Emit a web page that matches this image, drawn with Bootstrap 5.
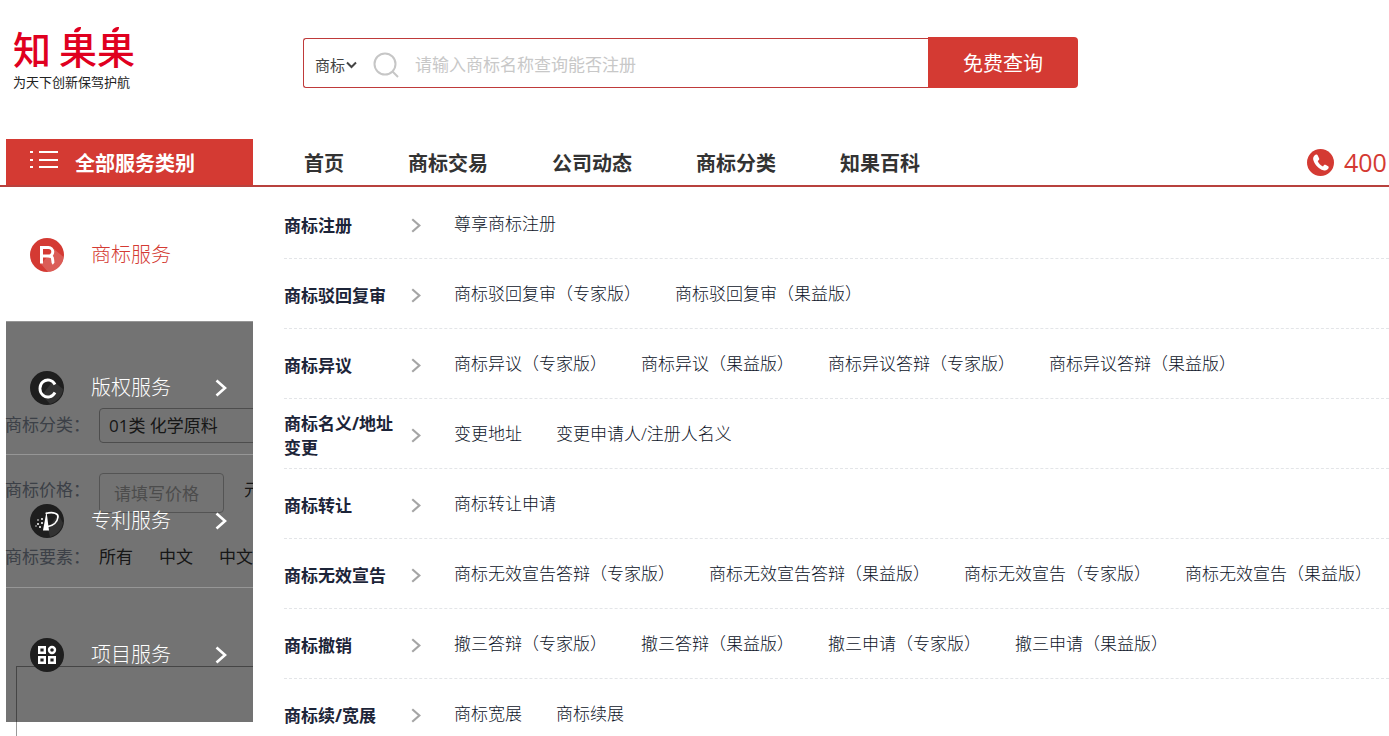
<!DOCTYPE html>
<html lang="zh-CN">
<head>
<meta charset="utf-8">
<meta name="viewport" content="width=device-width, initial-scale=1">
<title>知果果</title>
<link href="https://cdn.jsdelivr.net/npm/bootstrap@5.3.0/dist/css/bootstrap.min.css" rel="stylesheet">
<style>
:root { --brand: #d43a33; --ink: #1c2438; }
body { font-family: "Open Sans", "Noto Sans CJK SC", sans-serif; font-size: 17px; line-height: 24px; color: #333; background: #fff; }
a { text-decoration: none; color: inherit; }
button, input, select { font-family: inherit; }
svg { flex-shrink: 0; display: block; }

.brand-col { width: 303px; padding: 22px 0 0 13px; }
.logo-name { font: 500 38px/52px "Noto Sans CJK SC", sans-serif; color: #e0001f; gap: 8px; position: relative; }
.logo-name svg { position: absolute; left: 0; top: 3px; }
.logo-tag { font-size: 13px; line-height: 16px; color: #222; }

.search-col { width: 775px; padding-top: 37px; }
.search-box { border: 1px solid #bf3a3a; border-right: 0; border-radius: 3px 0 0 3px; height: 50px; margin-top: 1px; padding: 3px 0 0 11px; }
.kind-select { appearance: none; border: 0; background: none; font-size: 15px; color: #444; width: 31px; padding: 0; }
.search-input { border: 0; outline: 0; font-size: 17px; padding: 0; background: none; margin-left: 16px; }
.search-input::placeholder { color: #c8c8c8; }
.search-btn { width: 150px; height: 51px; font-size: 20px; color: #fff; background: var(--brand); border: 0; border-radius: 0 4px 4px 0; padding-top: 3px; }

.top-area { min-height: 139px; }
.main-nav { border-bottom: 2px solid #b8413d; height: 48px; padding-left: 6px; }
.all-cats { width: 247px; background: var(--brand); color: #fff; font-size: 20px; padding: 3px 0 0 24px; gap: 16px; }
.nav-links { font-size: 20px; gap: 64px; padding: 3px 0 0 51px; }
.hotline { width: 82px; gap: 10px; font-size: 25px; color: var(--brand); white-space: nowrap; }

.filters { padding: 221px 0 0 5px; }
.filter-row { line-height: 34px; }
.filter-name { width: 94px; color: #858f9e; flex-shrink: 0; }
.class-select { appearance: none; height: 35px; width: 260px; border: 1px solid #aaa; border-radius: 4px; background: #fff; padding: 0 9px; font-size: 17px; color: #333; }
.price-row { margin-top: 30px; }
.price-input { width: 125px; height: 40px; border: 1px solid #bbb; border-radius: 4px; padding: 0 14px; font-size: 17px; }
.price-input::placeholder { color: #a9a9a9; }
.unit { padding-left: 20px; }
.element-row { margin-top: 27px; }
.element-list { gap: 26px; }
.result-box { margin: 92px 16px 0 11px; border: 1px solid #999; border-bottom: 0; }

.mega { position: absolute; left: 6px; right: 0; top: 187px; bottom: 0; }
.side-menu { width: 247px; font-size: 20px; font-weight: 300; }
.side-item { height: 133px; padding: 0 26px 0 24px; color: #fff; background: rgba(0,0,0,.55); border-top: 1px solid rgba(255,255,255,.25); gap: 27px; }
.side-item.current { height: 134px; background: #fff; color: var(--brand); border-color: #fff; }
.side-item:last-child { height: 135px; }
.panel { background: #fff; padding: 2px 0 0 31px; min-width: 0; }
.service-row { height: 70px; border-bottom: 1px dashed #e3e5e8; color: var(--ink); }
.service-name { width: 127px; padding: 4px 12px 0 0; flex-shrink: 0; }
.service-links { gap: 34px; padding-left: 33px; font-weight: 300; color: #0c1328; white-space: nowrap; }
</style>
</head>
<body>
<svg width="0" height="0" class="position-absolute" aria-hidden="true">
  <symbol id="chev" viewBox="0 0 12 18"><path d="M1.5 1.5 10 9 1.5 16.500" fill="none" stroke="currentColor" stroke-width="2.600"/></symbol>
</svg>
<div class="position-relative min-vh-100 overflow-hidden d-flex flex-column">
  <header class="top-area d-flex">
    <a href="#" class="brand-col d-block flex-shrink-0">
      <div class="logo-name d-flex"><span>知</span><span>果果</span>
        <svg width="124" height="14" viewBox="0 0 124 14" fill="#e0001f" aria-hidden="true"><path d="M61 7c0-3 3-5 7-5 0 4-3 6-7 5z"/><path d="M99 7c0-3 3-5 7-5 0 4-3 6-7 5z"/></svg>
      </div>
      <div class="logo-tag">为天下创新保驾护航</div>
    </a>
    <form class="search-col d-flex align-items-start">
      <div class="search-box d-flex align-items-center flex-fill">
        <select class="kind-select" aria-label="查询类型"><option>商标</option></select>
        <svg width="11" height="8" viewBox="0 0 11 8" aria-hidden="true"><path d="M1 1.500 5.500 6 10 1.500" fill="none" stroke="#444" stroke-width="2"/></svg>
        <svg class="ms-3" width="26" height="26" viewBox="0 0 26 26" fill="none" stroke="#c6c6c6" stroke-width="2" aria-hidden="true"><circle cx="12" cy="12" r="10.500"/><path d="M19.500 19.500 25 25"/></svg>
        <input class="search-input flex-fill" type="text" aria-label="商标名称" placeholder="请输入商标名称查询能否注册">
      </div>
      <button class="search-btn" type="button">免费查询</button>
    </form>
  </header>

  <nav class="main-nav d-flex">
    <a href="#" class="all-cats d-flex align-items-center fw-bold flex-shrink-0">
      <svg class="mb-2" width="29" height="20" viewBox="0 0 29 20" fill="#fff" aria-hidden="true"><path d="M0 1h3v2H0zM9 1h19v2H9zM0 9h3v2H0zM9 9h19v2H9zM0 16h3v2H0zM9 16h19v2H9z"/></svg>
      全部服务类别
    </a>
    <div class="nav-links d-flex align-items-center fw-bold text-nowrap">
      <a href="#">首页</a><a href="#">商标交易</a><a href="#">公司动态</a><a href="#">商标分类</a><a href="#">知果百科</a>
    </div>
    <div class="hotline d-flex align-items-center ms-auto flex-shrink-0">
      <svg width="27" height="27" viewBox="0 0 27 27" aria-hidden="true"><circle cx="13.500" cy="13.500" r="13.500" fill="#d43a33"/><path d="M9.300 5.500c-2.300.7-3.800 3-2.800 6 1.500 4.700 5.200 8.300 9.800 9.800 2.700.7 5-.6 5.400-2.700.1-.7-.1-1.100-.6-1.400l-2.600-1.400c-.6-.3-1.100-.2-1.500.3l-1 1.500c-2.500-1.200-4.300-3.200-5.300-5.600l1.200-1.100c.4-.4.5-.9.300-1.400L10.500 6.100c-.2-.5-.6-.7-1.200-.6z" fill="#fff"/></svg>
      <span>400</span>
    </div>
  </nav>

  <main class="filters flex-fill d-flex flex-column">
    <div class="filter-row d-flex">
      <label class="filter-name" for="cls">商标分类：</label>
      <select id="cls" class="class-select"><option>01类 化学原料</option></select>
    </div>
    <div class="filter-row price-row d-flex">
      <label class="filter-name" for="price">商标价格：</label>
      <input id="price" class="price-input" type="text" placeholder="请填写价格"><span class="unit">元</span>
    </div>
    <div class="filter-row element-row d-flex">
      <span class="filter-name">商标要素：</span>
      <div class="element-list d-flex"><a href="#">所有</a><a href="#">中文</a><a href="#">中文</a></div>
    </div>
    <div class="result-box flex-fill"></div>
  </main>

  <div class="mega d-flex">
    <div class="side-menu flex-shrink-0">
      <a href="#" class="side-item current d-flex align-items-center">
        <svg width="34" height="34" viewBox="0 0 34 34" aria-hidden="true"><circle cx="17" cy="17" r="17" fill="#d43a33"/><path d="M24 11 33.500 19A17 17 0 0 1 18 34L11 26z" fill="#fff" opacity=".18"/><path d="M11.500 25.500V9.500h7a4.300 4.300 0 0 1 0 8.600h-7M18 18c4 0 4.500 1 4.700 4 0 2 .3 3 1 3.500" fill="none" stroke="#fff" stroke-width="3"/></svg>
        商标服务
      </a>
      <a href="#" class="side-item d-flex align-items-center">
        <svg width="34" height="34" viewBox="0 0 34 34" aria-hidden="true"><circle cx="17" cy="17" r="17" fill="#1e1e1e"/><path d="M23 10 33 18A17 17 0 0 1 20 33L12 24z" fill="#fff" opacity=".09"/><path d="M25 13.500A8 8.500 0 1 0 25 21.500" fill="none" stroke="#fff" stroke-width="2.800"/></svg>
        版权服务
        <svg class="ms-auto" width="12" height="18"><use href="#chev"/></svg>
      </a>
      <a href="#" class="side-item d-flex align-items-center">
        <svg width="34" height="34" viewBox="0 0 34 34" aria-hidden="true"><circle cx="17" cy="17" r="17" fill="#1e1e1e"/><path d="M28 10 33 19A17 17 0 0 1 20 33L18 25z" fill="#fff" opacity=".09"/><path d="M16.500 7.500 19 26.500h-6z" fill="#fff"/><path d="M15.500 9.500c8-2 13 0 12.500 3.500-.5 5-5 8.500-10 9.500" fill="none" stroke="#fff" stroke-width="1.700"/><g fill="#fff"><circle cx="12" cy="15" r="1"/><circle cx="8" cy="16" r=".8"/><circle cx="12" cy="19" r="1"/><circle cx="8" cy="20" r="1"/><circle cx="6" cy="22" r=".7"/><circle cx="10" cy="23" r="1"/></g></svg>
        专利服务
        <svg class="ms-auto" width="12" height="18"><use href="#chev"/></svg>
      </a>
      <a href="#" class="side-item d-flex align-items-center">
        <svg width="34" height="34" viewBox="0 0 34 34" aria-hidden="true"><circle cx="17" cy="17" r="17" fill="#1e1e1e"/><g fill="none" stroke="#fff" stroke-width="2.400"><path d="M9.200 9.200h5.600v5.600H9.200zM9.200 19.200h5.600v5.600H9.200zM19.200 19.200h5.600v5.600h-5.600z"/><circle cx="22" cy="12" r="3"/></g></svg>
        项目服务
        <svg class="ms-auto" width="12" height="18"><use href="#chev"/></svg>
      </a>
    </div>
    <div class="panel flex-fill" id="panel"></div>
  </div>
</div>
<script src="https://cdn.jsdelivr.net/npm/bootstrap@5.3.0/dist/js/bootstrap.bundle.min.js"></script>
<script>
const services = [
  ["商标注册", ["尊享商标注册"]],
  ["商标驳回复审", ["商标驳回复审（专家版）", "商标驳回复审（果益版）"]],
  ["商标异议", ["商标异议（专家版）", "商标异议（果益版）", "商标异议答辩（专家版）", "商标异议答辩（果益版）"]],
  ["商标名义/地址变更", ["变更地址", "变更申请人/注册人名义"]],
  ["商标转让", ["商标转让申请"]],
  ["商标无效宣告", ["商标无效宣告答辩（专家版）", "商标无效宣告答辩（果益版）", "商标无效宣告（专家版）", "商标无效宣告（果益版）"]],
  ["商标撤销", ["撤三答辩（专家版）", "撤三答辩（果益版）", "撤三申请（专家版）", "撤三申请（果益版）"]],
  ["商标续/宽展", ["商标宽展", "商标续展"]]
];
document.getElementById("panel").innerHTML = services.map(([name, links]) => `
  <div class="service-row d-flex align-items-center">
    <div class="service-name fw-bold">${name}</div>
    <svg width="10" height="15" color="#a5a5a5" class="mt-1"><use href="#chev"/></svg>
    <div class="service-links d-flex">${links.map(t => `<a href="#">${t}</a>`).join("")}</div>
  </div>`).join("");
</script>
</body>
</html>
